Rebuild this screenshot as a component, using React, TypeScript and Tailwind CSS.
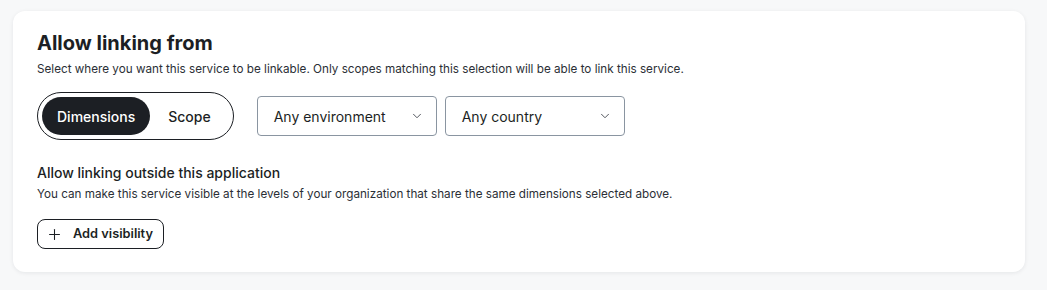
import { ChevronDown, Plus } from "lucide-react";

function Select({ label }: { label: string }) {
  return (
    <button className="flex h-10 w-[180px] items-center justify-between rounded-[4px] border border-[#8a95a1] bg-white pl-4 pr-3 text-[14px] text-[#1c1f24]">
      <span>{label}</span>
      <ChevronDown size={14} strokeWidth={1.5} className="text-[#3b4048]" />
    </button>
  );
}

export default function App() {
  return (
    <div
      className="min-h-[290px] bg-[#f7f8f9] pl-[13px] pr-[22px] pt-[11px]"
      style={{ fontFamily: "Inter, 'Noto Sans', sans-serif" }}
    >
      <div className="rounded-xl bg-white px-6 pb-[23px] pt-[20px] shadow-[0_1px_4px_rgba(16,24,40,0.08)]">
        <h2 className="text-[20px] font-bold leading-6 text-[#1c1f24]">Allow linking from</h2>
        <p className="mt-[6px] text-[11.7px] leading-4 text-[#2b2f36]">
          Select where you want this service to be linkable. Only scopes matching this selection will be able to link this service.
        </p>

        <div className="mt-[15px] flex items-center gap-[23px]">
          <div className="flex h-12 items-center rounded-full border border-[#1c1f24] p-1">
            <button className="h-[38px] rounded-full bg-[#1c1f24] px-[15px] text-[14px] font-medium text-white">
              Dimensions
            </button>
            <button className="h-[38px] rounded-full px-[18px] text-[14px] font-medium text-[#1c1f24]">
              Scope
            </button>
          </div>
          <div className="flex gap-2">
            <Select label="Any environment" />
            <Select label="Any country" />
          </div>
        </div>

        <h3 className="mt-[23px] text-[14px] font-medium leading-5 text-[#1c1f24]">
          Allow linking outside this application
        </h3>
        <p className="mt-[3px] text-[11.7px] leading-4 text-[#2b2f36]">
          You can make this service visible at the levels of your organization that share the same dimensions selected above.
        </p>

        <button className="mt-[17px] flex h-[30px] items-center gap-[10px] rounded-lg border border-[#1c1f24] pl-2 pr-2.5 text-[12.8px] font-semibold text-[#1c1f24]">
          <Plus size={17} strokeWidth={1.5} />
          Add visibility
        </button>
      </div>
    </div>
  );
}
